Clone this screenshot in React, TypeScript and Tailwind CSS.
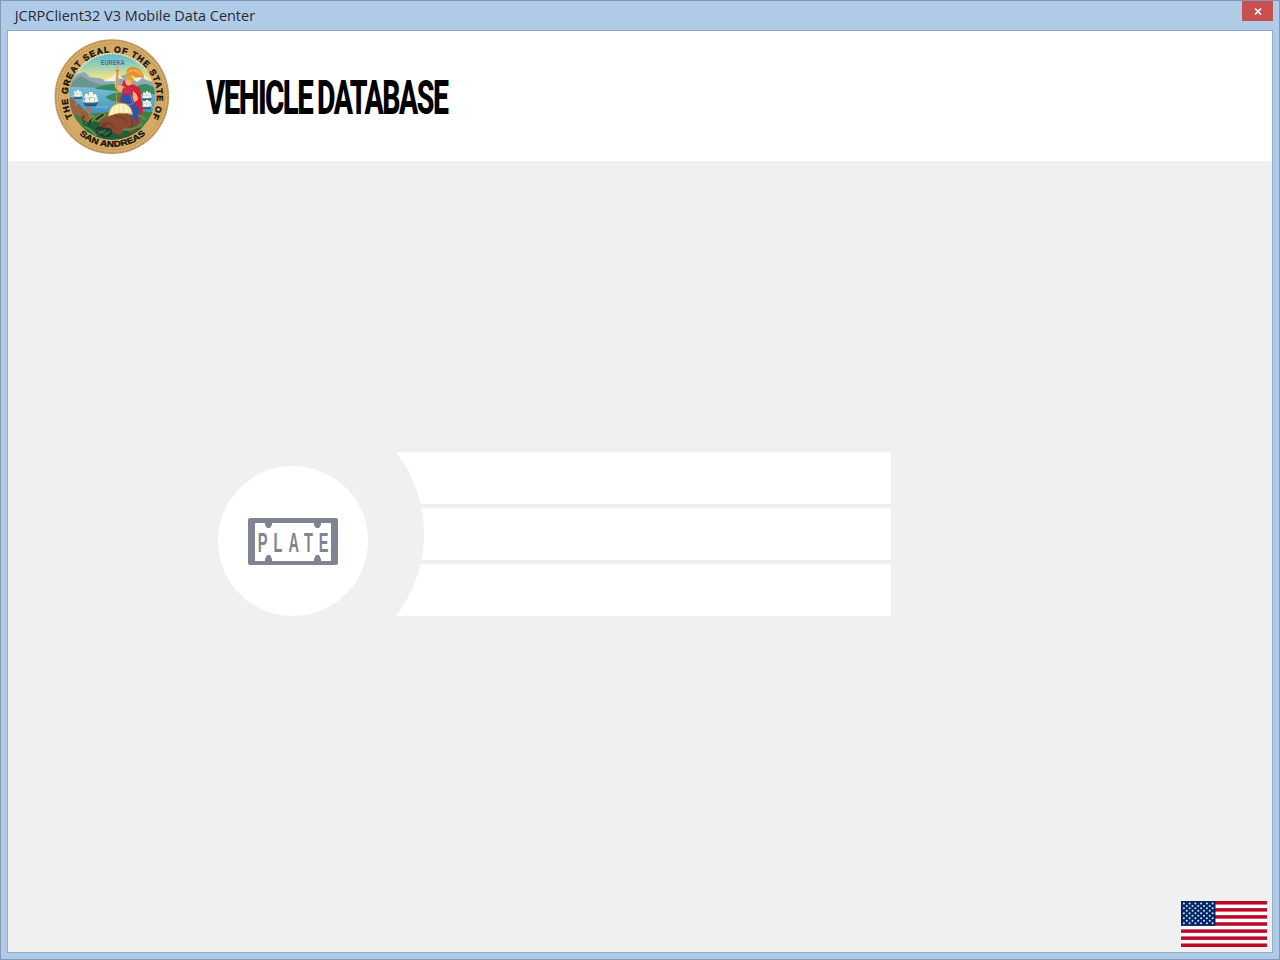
const sealFont = '"Liberation Sans", Arial, sans-serif';

function Ship({ x, y, s }: { x: number; y: number; s: number }) {
  return (
    <g transform={`translate(${x} ${y}) scale(${s})`}>
      <path d="M-22 17 L-15 29 H17 L24 16 L12 20 H-12 Z" fill="#37566b" />
      <path d="M-11 -13 V19 M2 -18 V19 M13 -12 V19 M-22 16 L-11 2" stroke="#8d8a74" strokeWidth="1.5" />
      <path d="M-16 -9 h9 l3 13 h-14z M-4 -14 h11 l3 16 h-15z M10 -8 h7 l4 12 h-12z M-18 5 h14 l2 12 h-18z M-1 4 h13 v13 h-15z M14 5 h8 l1 11 h-10z M-14 0 l-10 15 h7z" fill="#f5f4e6" />
    </g>
  );
}

function Seal() {
  return (
    <svg viewBox="0 0 372 372" className="h-[124px] w-[124px] shrink-0" role="img" aria-label="Great Seal of the State of San Andreas">
      <defs>
        <linearGradient id="sky" x2="0" y2="1">
          <stop offset="0" stopColor="#58b9cd" />
          <stop offset=".16" stopColor="#a3d3b3" />
          <stop offset=".3" stopColor="#fce779" />
          <stop offset=".42" stopColor="#f5e5a0" />
        </linearGradient>
        <linearGradient id="water" x2="0" y2="1">
          <stop offset="0" stopColor="#79bfd6" />
          <stop offset="1" stopColor="#3089b7" />
        </linearGradient>
        <clipPath id="scene"><circle cx="187" cy="188" r="129" /></clipPath>
        <path id="upper" d="M68 251 A134 134 0 1 1 306 251" />
        <path id="lower" d="M82 296 A150 150 0 0 0 292 296" />
      </defs>
      <circle cx="185.5" cy="188" r="172" fill="#cda264" />
      <circle cx="185.5" cy="188" r="168" fill="none" stroke="#b68a50" strokeWidth="5" strokeDasharray="4 5" />
      <circle cx="185.5" cy="188" r="163" fill="none" stroke="#e0bd83" strokeWidth="4" strokeDasharray="5 3" />
      <circle cx="185.5" cy="188" r="160" fill="#d4aa66" stroke="#bd914f" strokeWidth="2" />
      <g clipPath="url(#scene)">
        <circle cx="187" cy="188" r="129" fill="url(#sky)" />
        <path d="M52 145 L82 120 L103 113 L120 130 L148 132 L175 142 L198 132 L227 121 L256 137 L284 128 L320 154 V180 H52Z" fill="#8ea8b5" />
        <path d="M158 142 L181 132 L201 117 L222 136 L206 133 L197 142Z M250 137 L277 114 L301 143 L277 132 L262 144Z" fill="#f2f1e4" />
        <path d="M54 151 L91 126 L120 141 L145 151 L185 154 L226 157 V181 H54Z" fill="#6c958d" />
        <path d="M53 159 Q120 157 184 167 L320 160 V260 H53Z" fill="url(#water)" />
        <path d="M134 164 Q184 142 221 155 L204 172Z M166 190 Q194 169 232 179 L230 204 L188 202Z" fill="#368b58" />
        <path d="M258 158 Q292 137 320 170 V181 H267Z" fill="#3b8d61" />
        <path d="M61 187 Q107 190 137 191 M135 219 H174 M270 220 H314" stroke="#a7d1dd" strokeWidth="2" fill="none" />
        <Ship x={83} y={177} s={0.62} />
        <Ship x={121} y={188} s={1} />
        <Ship x={290} y={181} s={0.65} />
        <Ship x={290} y={207} s={0.65} />
        <path d="M56 204 Q67 225 87 222 Q103 229 115 239 L177 234 L235 244 L266 232 L309 234 V322 H56Z" fill="#467d42" />
        <path d="M50 199 l15-10 14 15 -4 12 13 17 -18 18z M61 230 l24-22 15 17 -8 24z" fill="#976342" />
        <path d="M93 248 Q118 261 151 265 T240 278 T306 273 L272 320 H114Z" fill="#225d35" />
        <path d="M94 241 l14-9 12 16-5 15-19-6z" fill="#a85a34" />
        <path d="M107 229 l8-9 8 9-7 8z" fill="#ef5630" />
        <path d="M113 229 L128 265 M103 271 L131 244 M118 241 l17 9" stroke="#b99b5e" strokeWidth="2" />
        <path d="M102 244 l-4 13 M124 254 l-7 19" stroke="#223c2e" strokeWidth="4" />
        <path d="M132 254 l28-19 4 9 -24 18z" fill="#2a3928" stroke="#d4b46e" strokeWidth="2" />
        <path d="M217 176 Q211 145 230 132 L247 150 L270 162 L279 230 L265 271 L230 260 L203 216Z" fill="#d91f32" />
        <path d="M221 181 L246 182 L249 207 L269 225 L263 266 L238 257 L207 213Z" fill="#2c54aa" />
        <path d="M242 184 L250 209 L229 213 M218 210 l24 40" fill="none" stroke="#6f83cb" strokeWidth="3" />
        <path d="M216 174 Q195 170 194 153 L199 113 L208 112 L204 151 L228 160Z" fill="#eeb679" />
        <path d="M202 108 L199 211" stroke="#c58935" strokeWidth="3" />
        <path d="M202 95 l5 14 -5 7 -5-7z" fill="#f16632" />
        <circle cx="202" cy="104" r="3" fill="#ffe59c" />
        <ellipse cx="236" cy="140" rx="11" ry="15" fill="#efb27e" />
        <path d="M226 137 Q227 121 240 120 L253 139 L244 154 L242 138Z" fill="#d9a838" />
        <path d="M230 126 Q225 96 251 98 Q279 103 283 132 Q266 127 258 132 L247 124Z" fill="#e58f36" />
        <path d="M233 119 Q239 103 258 113 L278 126 M240 113 Q254 103 272 116" fill="none" stroke="#f2ba53" strokeWidth="3" />
        <path d="M220 160 Q236 163 249 158 L247 178 Q225 184 215 172Z" fill="#c42f52" />
        <path d="M249 171 Q267 183 263 198 L253 205 L248 190Z" fill="#edb57e" />
        <path d="M175 249 Q176 213 208 207 Q243 205 248 242 Q218 231 175 249Z" fill="#f4e7ac" stroke="#cd9b3e" strokeWidth="3" />
        <path d="M184 242 L190 219 M198 236 L201 213 M214 234 V211 M230 236 L226 214" stroke="#fff9d8" strokeWidth="5" />
        <path d="M147 274 Q153 253 174 249 Q206 229 242 246 Q266 260 260 281 L250 296 H238 L226 285 L211 304 L197 300 L187 293 L171 288 L157 289Z" fill="#8b4930" />
        <path d="M160 270 Q185 260 194 284 M197 248 Q223 248 232 267 M244 253 Q253 273 238 284" fill="none" stroke="#6c3527" strokeWidth="3" />
        <path d="M152 273 L163 265 L169 277 L160 284Z" fill="#6e3b2c" />
        <path d="M136 283 Q145 272 165 282 Q184 279 187 292 Q187 310 164 310 Q137 305 136 283Z" fill="#213b32" />
        <path d="M140 288 l15 8 9-8 6 12 11-10 M145 301 l10-10 11 13" fill="none" stroke="#32754b" strokeWidth="4" />
        <path d="M219 287 Q260 287 276 270 M103 278 Q132 292 139 309 M263 245 q12 0 23 12" fill="none" stroke="#4f934d" strokeWidth="7" />
      </g>
      <path d="M85 109 A128 128 0 0 1 290 111" fill="none" stroke="#f4e7c8" strokeWidth="5" strokeDasharray="5 3" />
      <text x="152" y="94" textLength="72" lengthAdjust="spacingAndGlyphs" fontFamily={sealFont} fontWeight="700" fontSize="20" fill="#5966a0">EUREKA</text>
      <text fontFamily={sealFont} fontWeight="700" fontSize="26" fill="#161410" stroke="#161410" strokeWidth="1.2">
        <textPath href="#upper" startOffset="1" textLength="548" lengthAdjust="spacing">THE GREAT SEAL OF THE STATE OF</textPath>
      </text>
      <text fontFamily={sealFont} fontWeight="700" fontSize="25" fill="#161410" stroke="#161410" strokeWidth="1">
        <textPath href="#lower" startOffset="8" textLength="218" lengthAdjust="spacingAndGlyphs">SAN ANDREAS</textPath>
      </text>
    </svg>
  );
}

function Flag() {
  return (
    <svg viewBox="0 0 86 46" className="h-[46px] w-[86px]" role="img" aria-label="United States flag">
      <rect width="86" height="46" fill="#fff" />
      {Array.from({ length: 7 }, (_, i) => (
        <rect key={i} y={(i * 92) / 13} width="86" height={46 / 13} fill="#bd0928" />
      ))}
      <rect width="34.5" height="24.77" fill="#002868" />
      {Array.from({ length: 9 }, (_, r) =>
        Array.from({ length: r % 2 ? 5 : 6 }, (_, c) => (
          <circle key={`${r}-${c}`} cx={2.9 + c * 5.75 + (r % 2 ? 2.87 : 0)} cy={2.4 + r * 2.48} r="1" fill="#dce4ef" />
        ))
      )}
    </svg>
  );
}

function PlateIcon() {
  return (
    <svg viewBox="0 0 90 47" className="h-[47px] w-[90px]" role="img" aria-label="Plate">
      <rect width="90" height="47" rx="2" fill="#808390" />
      <rect x="7" y="5" width="76" height="38" fill="#fff" />
      <path d="M17 4h7v3l-2 3h-3l-2-3z M66 4h7v3l-2 3h-3l-2-3z M17 44h7v-3l-2-4h-3l-2 4z M66 44h7v-3l-2-4h-3l-2 4z" fill="#808390" />
      <text transform="translate(9.8 33.7) scale(.52 1)" fontFamily={sealFont} fontSize="28" fontWeight="700" fill="#808390" textLength="136" lengthAdjust="spacing">PLATE</text>
    </svg>
  );
}

export default function App() {
  return (
    <main className="flex h-screen w-full flex-col overflow-hidden border border-[#8498b3] bg-[#b0cbe8] px-1.5 pb-1.5 font-['Open_Sans',sans-serif]">
      <div className="flex h-[29px] shrink-0 items-start justify-between">
        <span className="origin-left scale-x-[0.963] pl-2 pt-[2px] text-[15px] leading-6 whitespace-nowrap text-[#252b33]">JCRPClient32 V3 Mobile Data Center</span>
        <button aria-label="Close" className="flex h-5 w-[31px] items-center justify-center bg-[#c85051]">
          <svg viewBox="0 0 8 7" className="h-[7px] w-2">
            <path d="M1 0.5 L7 6.5 M7 0.5 L1 6.5" stroke="white" strokeWidth="1.6" />
          </svg>
        </button>
      </div>
      <div className="flex min-h-0 flex-1 flex-col border border-[#91acc8] bg-[#f0f0f0]">
        <header className="flex h-[130px] shrink-0 items-start bg-white pt-[3px] pl-[42px]">
          <Seal />
          <h1 className="flex pt-[47px] pl-8 font-['Roboto',sans-serif] text-[48px] leading-[34px] font-extrabold tracking-[-2.5px] text-black">
            <span className="block w-[111px] origin-left scale-x-[0.612] whitespace-nowrap">VEHICLE</span>
            <span className="block origin-left scale-x-[0.593] whitespace-nowrap">DATABASE</span>
          </h1>
        </header>
        <section className="flex flex-1 flex-col justify-between pt-[291px]">
          <div className="flex h-[164px] pl-[210px]">
            <div className="z-10 mt-3.5 flex size-[150px] shrink-0 items-center justify-center rounded-full bg-white">
              <PlateIcon />
            </div>
            <div className="relative ml-[22px] flex w-[501px] flex-col gap-1">
              <div className="h-[52px] bg-white" />
              <div className="h-[52px] bg-white" />
              <div className="h-[52px] bg-white" />
              <div className="absolute top-[-52px] left-[-234px] size-[268px] rounded-full bg-[#f0f0f0]" />
            </div>
          </div>
          <footer className="flex justify-end pr-[5px] pb-[5px]"><Flag /></footer>
        </section>
      </div>
    </main>
  );
}
